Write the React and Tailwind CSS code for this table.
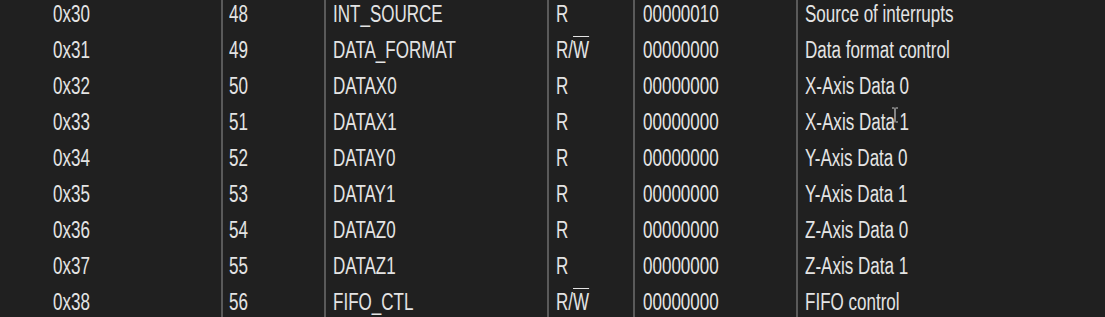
import React from "react";

const rows = [
  ["0x30", "48", "INT_SOURCE", "R", "00000010", "Source of interrupts"],
  ["0x31", "49", "DATA_FORMAT", "RW", "00000000", "Data format control"],
  ["0x32", "50", "DATAX0", "R", "00000000", "X-Axis Data 0"],
  ["0x33", "51", "DATAX1", "R", "00000000", "X-Axis Data 1"],
  ["0x34", "52", "DATAY0", "R", "00000000", "Y-Axis Data 0"],
  ["0x35", "53", "DATAY1", "R", "00000000", "Y-Axis Data 1"],
  ["0x36", "54", "DATAZ0", "R", "00000000", "Z-Axis Data 0"],
  ["0x37", "55", "DATAZ1", "R", "00000000", "Z-Axis Data 1"],
  ["0x38", "56", "FIFO_CTL", "RW", "00000000", "FIFO control"],
];

function T({ children }) {
  return (
    <span className="inline-block origin-left scale-x-74 whitespace-nowrap">{children}</span>
  );
}

export default function App() {
  return (
    <div className="relative h-[317px] w-[1105px] overflow-hidden bg-[#202020] text-[#e4e4e4] text-[23px] leading-[36px] font-['Liberation_Sans',Arial,sans-serif]">
      <div className="-mt-[4px]">
        {rows.map((r) => (
          <div
            key={r[0]}
            className="grid h-[36px] grid-cols-[221px_103px_223px_86px_163px_1fr]"
          >
            <div className="pl-[53px]"><T>{r[0]}</T></div>
            <div className="border-l-2 border-[#5a5a5a] pl-[6px]"><T>{r[1]}</T></div>
            <div className="border-l-2 border-[#5a5a5a] pl-[7px]"><T>{r[2]}</T></div>
            <div className="border-l-2 border-[#5a5a5a] pl-[7px]">
              {r[3] === "RW" ? (
                <T>
                  R/<span className="overline decoration-1">W</span>
                </T>
              ) : (
                <T>{r[3]}</T>
              )}
            </div>
            <div className="border-l-2 border-[#5a5a5a] pl-[8px]"><T>{r[4]}</T></div>
            <div className="border-l-2 border-[#5a5a5a] pl-[7px]"><T>{r[5]}</T></div>
          </div>
        ))}
      </div>
      <svg
        className="absolute left-[891px] top-[107px]"
        width="8"
        height="16"
        viewBox="0 0 8 16"
      >
        <path d="M1 1h2.5M4.5 1H7M4 1.5v13M1 15h2.5M4.5 15H7" stroke="#c8c8c8" strokeWidth="1.2" fill="none" />
      </svg>
    </div>
  );
}
